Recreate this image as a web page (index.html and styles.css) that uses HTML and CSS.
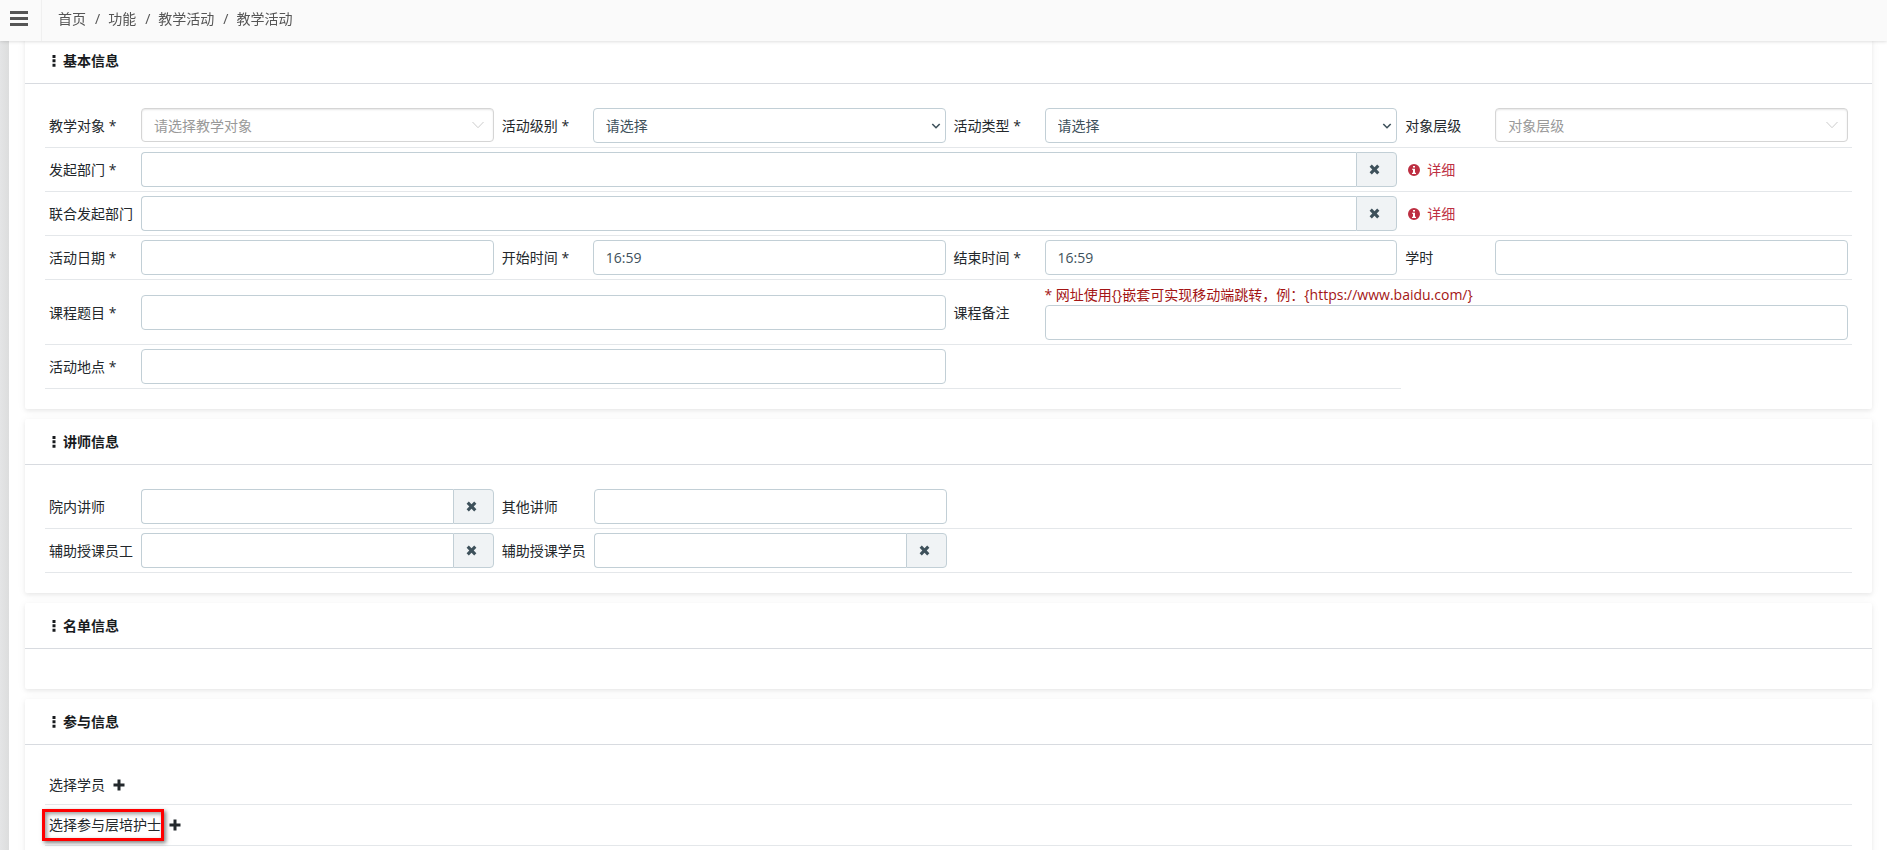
FILE: index.html
```html
<!DOCTYPE html>
<html lang="zh-CN">
<head>
    <meta charset="UTF-8">
    <meta name="viewport" content="width=device-width, initial-scale=1.0">
    <title>教学活动</title>
    <link rel="stylesheet" href="styles.css">
</head>
<body>

    <!-- Shared icons -->
    <svg class="sprite" aria-hidden="true">
        <symbol id="icon-more" viewBox="0 0 4 12">
            <path d="M0.5 0h3v3h-3zM0.5 4.3h3v3h-3zM0.5 8.7h3v3h-3z"/>
        </symbol>
        <symbol id="icon-times" viewBox="0 0 11 11">
            <path d="M2.8 0.6 5.5 3.3 8.2 0.6 10.4 2.8 7.7 5.5 10.4 8.2 8.2 10.4 5.5 7.7 2.8 10.4 0.6 8.2 3.3 5.5 0.6 2.8z"/>
        </symbol>
        <symbol id="icon-info" viewBox="0 0 12 12">
            <path fill-rule="evenodd" d="M6 0a6 6 0 1 1 0 12A6 6 0 0 1 6 0zM5 2v1.6h2V2zM4 4.8v1h1v3H4v1.2h4V8.800H7v-4z"/>
        </symbol>
        <symbol id="icon-plus" viewBox="0 0 12 12">
            <path d="M4.500 0.500h3v4h4v3h-4v4h-3v-4h-4v-3h4z"/>
        </symbol>
        <symbol id="icon-down" viewBox="0 0 12 8">
            <path d="M0.500 1 6 6.700 11.500 1" fill="none" stroke="currentColor"/>
        </symbol>
        <symbol id="icon-caret" viewBox="0 0 10 8">
            <path d="M1.300 2 5 5.700 8.700 2" fill="none" stroke="currentColor" stroke-width="1.600"/>
        </symbol>
    </svg>

    <!-- Top Bar -->
    <header class="topbar">
        <button type="button" class="menu-btn" aria-label="菜单">
            <svg width="18" height="15" viewBox="0 0 18 15"><path d="M0 0h18v3H0zM0 6h18v3H0zM0 12h18v3H0z"/></svg>
        </button>
        <nav class="breadcrumb">
            <a href="#">首页</a>
            <a href="#">功能</a>
            <a href="#">教学活动</a>
            <a href="#">教学活动</a>
        </nav>
    </header>

    <div class="layout">
        <aside class="sidebar"></aside>

        <main class="content">

            <!-- Basic Info -->
            <section class="card">
                <h2 class="card-header"><svg class="icon-more"><use href="#icon-more"/></svg>基本信息</h2>
                <form class="card-body form-grid">
                    <div class="cell"><label for="target">教学对象 *</label></div>
                    <div class="cell cell-top">
                        <div class="picker">
                            <input type="text" id="target" placeholder="请选择教学对象" readonly>
                            <svg class="icon-down"><use href="#icon-down"/></svg>
                        </div>
                    </div>
                    <div class="cell"><label for="level">活动级别 *</label></div>
                    <div class="cell">
                        <div class="select-box">
                            <select id="level" class="control"><option>请选择</option></select>
                            <svg class="icon-caret"><use href="#icon-caret"/></svg>
                        </div>
                    </div>
                    <div class="cell"><label for="type">活动类型 *</label></div>
                    <div class="cell">
                        <div class="select-box">
                            <select id="type" class="control"><option>请选择</option></select>
                            <svg class="icon-caret"><use href="#icon-caret"/></svg>
                        </div>
                    </div>
                    <div class="cell"><label for="tier">对象层级</label></div>
                    <div class="cell cell-top">
                        <div class="picker">
                            <input type="text" id="tier" placeholder="对象层级" readonly>
                            <svg class="icon-down"><use href="#icon-down"/></svg>
                        </div>
                    </div>

                    <div class="cell"><label for="dept">发起部门 *</label></div>
                    <div class="cell span-5">
                        <div class="input-group">
                            <input type="text" id="dept" class="control">
                            <button type="button" class="clear-btn" aria-label="清除"><svg class="icon-times"><use href="#icon-times"/></svg></button>
                        </div>
                    </div>
                    <div class="cell span-2"><a href="#" class="detail"><svg class="icon-info"><use href="#icon-info"/></svg>详细</a></div>

                    <div class="cell"><label for="jointDept">联合发起部门</label></div>
                    <div class="cell span-5">
                        <div class="input-group">
                            <input type="text" id="jointDept" class="control">
                            <button type="button" class="clear-btn" aria-label="清除"><svg class="icon-times"><use href="#icon-times"/></svg></button>
                        </div>
                    </div>
                    <div class="cell span-2"><a href="#" class="detail"><svg class="icon-info"><use href="#icon-info"/></svg>详细</a></div>

                    <div class="cell"><label for="date">活动日期 *</label></div>
                    <div class="cell"><input type="text" id="date" class="control"></div>
                    <div class="cell"><label for="start">开始时间 *</label></div>
                    <div class="cell"><input type="text" id="start" class="control" value="16:59"></div>
                    <div class="cell"><label for="end">结束时间 *</label></div>
                    <div class="cell"><input type="text" id="end" class="control" value="16:59"></div>
                    <div class="cell"><label for="hours">学时</label></div>
                    <div class="cell"><input type="text" id="hours" class="control"></div>

                    <div class="cell"><label for="subject">课程题目 *</label></div>
                    <div class="cell span-3"><input type="text" id="subject" class="control"></div>
                    <div class="cell"><label for="remark">课程备注</label></div>
                    <div class="cell cell-stack span-3">
                        <span class="hint">* 网址使用{}嵌套可实现移动端跳转，例：{https://www.baidu.com/}</span>
                        <input type="text" id="remark" class="control">
                    </div>

                    <div class="cell"><label for="place">活动地点 *</label></div>
                    <div class="cell span-3"><input type="text" id="place" class="control"></div>
                    <div class="cell span-2"></div>
                </form>
            </section>

            <!-- Teacher Info -->
            <section class="card">
                <h2 class="card-header"><svg class="icon-more"><use href="#icon-more"/></svg>讲师信息</h2>
                <form class="card-body form-grid form-grid-wide">
                    <div class="cell"><label for="teacher">院内讲师</label></div>
                    <div class="cell">
                        <div class="input-group">
                            <input type="text" id="teacher" class="control">
                            <button type="button" class="clear-btn" aria-label="清除"><svg class="icon-times"><use href="#icon-times"/></svg></button>
                        </div>
                    </div>
                    <div class="cell"><label for="otherTeacher">其他讲师</label></div>
                    <div class="cell"><input type="text" id="otherTeacher" class="control"></div>
                    <div class="cell span-4"></div>

                    <div class="cell"><label for="staff">辅助授课员工</label></div>
                    <div class="cell">
                        <div class="input-group">
                            <input type="text" id="staff" class="control">
                            <button type="button" class="clear-btn" aria-label="清除"><svg class="icon-times"><use href="#icon-times"/></svg></button>
                        </div>
                    </div>
                    <div class="cell"><label for="student">辅助授课学员</label></div>
                    <div class="cell">
                        <div class="input-group">
                            <input type="text" id="student" class="control">
                            <button type="button" class="clear-btn" aria-label="清除"><svg class="icon-times"><use href="#icon-times"/></svg></button>
                        </div>
                    </div>
                    <div class="cell span-4"></div>
                </form>
            </section>

            <!-- List Info -->
            <section class="card">
                <h2 class="card-header"><svg class="icon-more"><use href="#icon-more"/></svg>名单信息</h2>
                <div class="card-body"></div>
            </section>

            <!-- Participants -->
            <section class="card">
                <h2 class="card-header"><svg class="icon-more"><use href="#icon-more"/></svg>参与信息</h2>
                <div class="card-body">
                    <div class="pick-row">
                        <span>选择学员</span>
                        <button type="button" class="add-btn" aria-label="添加学员"><svg class="icon-plus"><use href="#icon-plus"/></svg></button>
                    </div>
                    <div class="pick-row">
                        <span class="marked">选择参与层培护士</span>
                        <button type="button" class="add-btn" aria-label="添加护士"><svg class="icon-plus"><use href="#icon-plus"/></svg></button>
                    </div>
                </div>
            </section>

        </main>
    </div>

</body>
</html>
```
FILE: styles.css
```css
/* General Reset */
* {
    margin: 0;
    padding: 0;
    box-sizing: border-box;
}

body {
    font-family: "Open Sans", "Noto Sans CJK SC", sans-serif;
    font-size: 14px;
    line-height: 21px;
    color: #23282c;
    background: #fff;
    height: 100vh;
    overflow: hidden;
}

a {
    text-decoration: none;
}

button {
    border: none;
    background: none;
    cursor: pointer;
}

svg {
    display: block;
    fill: currentColor;
}

.sprite {
    display: none;
}

/* Top Bar */
.topbar {
    position: fixed;
    top: 0;
    left: 0;
    right: 0;
    z-index: 10;
    display: flex;
    height: 41px;
    background: #fafafa;
    box-shadow: 0 0 4px rgba(0, 0, 0, 0.2);
}

.menu-btn {
    width: 42px;
    padding: 0 0 4px 10px;
    color: #555;
    border-right: 1px solid #f0f0f0;
}

.breadcrumb {
    display: flex;
    align-items: center;
    padding: 0 16px 4px;
}

.breadcrumb a {
    color: #555;
}

.breadcrumb a + a::before {
    content: "/";
    padding: 0 8px 0 9px;
}

/* Page Layout */
.layout {
    display: flex;
    min-height: 100vh;
}

.sidebar {
    width: 9px;
    background: linear-gradient(to right, #e4e5e6, #dcdddd);
}

.content {
    flex: 1;
    padding: 38px 15px 0 16px;
}

/* Cards */
.card {
    margin-bottom: 10px;
    background: #fff;
    border-radius: 2px;
    box-shadow: 0 2px 4px rgba(0, 0, 0, 0.06), 0 1px 10px rgba(0, 0, 0, 0.05);
}

.card-header {
    display: flex;
    align-items: center;
    gap: 7px;
    height: 46px;
    padding: 0 27px;
    font-size: 14px;
    font-weight: bold;
    color: #181b1e;
    border-bottom: 1px solid #d8dbe0;
}

.card-body {
    padding: 20px;
}

/* Form Grid */
.form-grid {
    display: grid;
    grid-template-columns: 92px 1fr 91px 1fr 91px 1fr 90px 1fr;
}

.form-grid-wide {
    grid-template-columns: 92px 1fr 92px 1fr 90px 1fr 90px 1fr;
}

.cell {
    display: flex;
    align-items: center;
    min-width: 0;
    padding: 4px;
    border-bottom: 1px solid #e4e7ea;
}

.cell-top {
    align-items: flex-start;
}

.cell-stack {
    flex-direction: column;
    align-items: stretch;
}

.span-2 {
    grid-column: span 2;
}

.span-3 {
    grid-column: span 3;
}

.span-4 {
    grid-column: span 4;
}

.span-5 {
    grid-column: span 5;
}

/* Controls */
.control {
    width: 100%;
    height: 35px;
    padding: 0 12px;
    font: inherit;
    color: #3e515b;
    background: #fff;
    border: 1px solid #c2cfd6;
    border-radius: 4px;
    outline: none;
}

.select-box,
.picker {
    display: grid;
    align-items: center;
    width: 100%;
}

.select-box > *,
.picker > * {
    grid-area: 1 / 1;
}

.select-box svg,
.picker svg {
    justify-self: end;
    pointer-events: none;
}

select.control {
    appearance: none;
}

.picker input {
    width: 100%;
    height: 34px;
    padding: 0 12px;
    font: inherit;
    background: #fff;
    border: 1px solid #d5d5d5;
    border-radius: 4px;
    box-shadow: inset 0 1px 2px rgba(0, 0, 0, 0.1);
    outline: none;
}

.picker input::placeholder {
    color: #999;
}

.input-group {
    display: flex;
    width: 100%;
}

.input-group .control {
    flex: 1;
    min-width: 0;
    border-right: none;
    border-radius: 4px 0 0 4px;
}

.clear-btn {
    width: 41px;
    padding-left: 12px;
    color: #3e515b;
    background: #f0f3f5;
    border: 1px solid #c2cfd6;
    border-radius: 0 4px 4px 0;
}

.detail {
    display: flex;
    align-items: center;
    gap: 7px;
    padding-left: 3px;
    color: #bd2f42;
}

.hint {
    color: #a31515;
}

/* Participants */
.pick-row {
    display: flex;
    align-items: center;
    gap: 8px;
    height: 40px;
    padding: 0 4px;
    border-bottom: 1px solid #e4e7ea;
}

.pick-row + .pick-row {
    height: 41px;
}

.add-btn {
    color: #23282c;
}

.marked {
    margin: 0 -3px 0 -7px;
    padding: 2px 0 3px 4px;
    border: 3px solid #f00;
    box-shadow: 2px 2px 4px rgba(0, 0, 0, 0.5), inset 2px 2px 4px rgba(0, 0, 0, 0.4);
}

/* Icons */
.icon-more {
    width: 4px;
    height: 12px;
}

.icon-times {
    width: 11px;
    height: 11px;
}

.icon-info,
.icon-plus {
    width: 12px;
    height: 12px;
}

.icon-down {
    width: 12px;
    height: 8px;
    margin-right: 10px;
    color: #ccc;
}

.icon-caret {
    width: 10px;
    height: 8px;
    margin-right: 5px;
    color: #3e515b;
}
```
